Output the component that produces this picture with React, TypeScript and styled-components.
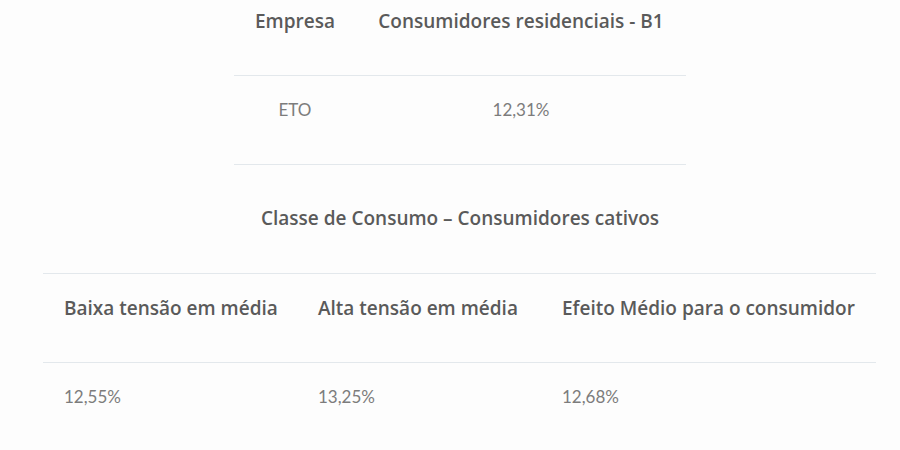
import React, { FC } from 'react'
import styled, { createGlobalStyle } from 'styled-components'

const GlobalStyle = createGlobalStyle`
  html, body {
    margin: 0;
    padding: 0;
    background: #fdfdfd;
    font-family: "Open Sans", Lato, "Liberation Sans", sans-serif;
  }
`

const tarifaEmpresa = [{ empresa: 'ETO', valor: '12,31%' }]

const classes = [
  { titulo: 'Baixa tensão em média', valor: '12,55%', width: 254 },
  { titulo: 'Alta tensão em média', valor: '13,25%', width: 244 },
  { titulo: 'Efeito Médio para o consumidor', valor: '12,68%', width: 335 },
]

const App: FC = (): JSX.Element => {
  return (
    <Page>
      <GlobalStyle />
      <SmallTable>
        <colgroup>
          <col style={{ width: 122 }} />
          <col />
        </colgroup>
        <thead>
          <tr>
            <Th center>Empresa</Th>
            <Th center>Consumidores residenciais - B1</Th>
          </tr>
        </thead>
        <tbody>
          {tarifaEmpresa.map(item => (
            <tr key={item.empresa}>
              <Td center>{item.empresa}</Td>
              <Td center>{item.valor}</Td>
            </tr>
          ))}
        </tbody>
      </SmallTable>

      <Caption>Classe de Consumo – Consumidores cativos</Caption>

      <WideTable>
        <colgroup>
          {classes.map(c => (
            <col key={c.titulo} style={{ width: c.width }} />
          ))}
        </colgroup>
        <thead>
          <tr>
            {classes.map(c => (
              <Th key={c.titulo}>{c.titulo}</Th>
            ))}
          </tr>
        </thead>
        <tbody>
          <tr>
            {classes.map(c => (
              <Td key={c.titulo}>{c.valor}</Td>
            ))}
          </tr>
        </tbody>
      </WideTable>
    </Page>
  )
}

export default App

const Page = styled.div`
  width: 900px;
  height: 450px;
  overflow: hidden;
  display: flex;
  flex-direction: column;
  align-items: flex-start;
`

const BaseTable = styled.table`
  border-collapse: collapse;
  table-layout: fixed;
`

const SmallTable = styled(BaseTable)`
  width: 452px;
  margin: -14px 0 0 234px;
  border-bottom: 1px solid #e3e8ec;
`

const WideTable = styled(BaseTable)`
  width: 833px;
  margin: 45px 0 0 43px;
`

const Th = styled.th<{ center?: boolean }>`
  border-top: 1px solid #e3e8ec;
  padding: 24px 21px 44px;
  line-height: 20px;
  font-size: 19px;
  font-weight: 600;
  color: #5a5a5a;
  white-space: nowrap;
  text-align: ${p => (p.center ? 'center' : 'left')};
`

const Td = styled.td<{ center?: boolean }>`
  border-top: 1px solid #e3e8ec;
  padding: 24px 21px 44px;
  line-height: 20px;
  font-size: 17px;
  font-family: Lato, "Open Sans", sans-serif;
  color: #7c7c7c;
  text-align: ${p => (p.center ? 'center' : 'left')};
`

const Caption = styled.div`
  align-self: stretch;
  margin-top: 43px;
  padding-left: 20px;
  line-height: 20px;
  font-size: 19px;
  font-weight: 600;
  color: #5a5a5a;
  text-align: center;
`
